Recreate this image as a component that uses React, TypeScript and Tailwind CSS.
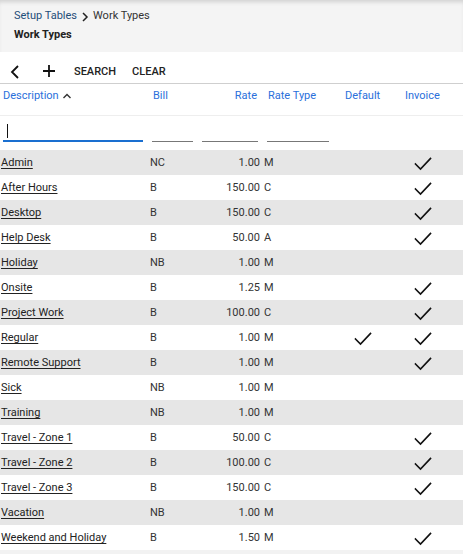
import React from "react";

type Row = { d: string; b: string; r: string; t: string; def?: boolean; inv?: boolean };

const rows: Row[] = [
  { d: "Admin", b: "NC", r: "1.00", t: "M", inv: true },
  { d: "After Hours", b: "B", r: "150.00", t: "C", inv: true },
  { d: "Desktop", b: "B", r: "150.00", t: "C", inv: true },
  { d: "Help Desk", b: "B", r: "50.00", t: "A", inv: true },
  { d: "Holiday", b: "NB", r: "1.00", t: "M" },
  { d: "Onsite", b: "B", r: "1.25", t: "M", inv: true },
  { d: "Project Work", b: "B", r: "100.00", t: "C", inv: true },
  { d: "Regular", b: "B", r: "1.00", t: "M", def: true, inv: true },
  { d: "Remote Support", b: "B", r: "1.00", t: "M", inv: true },
  { d: "Sick", b: "NB", r: "1.00", t: "M" },
  { d: "Training", b: "NB", r: "1.00", t: "M" },
  { d: "Travel - Zone 1", b: "B", r: "50.00", t: "C", inv: true },
  { d: "Travel - Zone 2", b: "B", r: "100.00", t: "C", inv: true },
  { d: "Travel - Zone 3", b: "B", r: "150.00", t: "C", inv: true },
  { d: "Vacation", b: "NB", r: "1.00", t: "M" },
  { d: "Weekend and Holiday", b: "B", r: "1.50", t: "M", inv: true },
];

function Check() {
  return (
    <svg width="18" height="14" viewBox="0 0 18 14" fill="none">
      <polyline points="1.5,7 6.5,12 16.5,1.5" stroke="#111" strokeWidth="1.6" strokeLinecap="square" />
    </svg>
  );
}

export default function App() {
  return (
    <div className="w-[463px] h-[554px] overflow-hidden bg-white text-[11px] text-[#333]" style={{ fontFamily: "Roboto, 'Liberation Sans', sans-serif" }}>
      <div className="h-[52px] bg-[#f4f4f4] pl-[14px] pt-[9px] shadow-[inset_0_4px_4px_-2px_rgba(0,0,0,0.15)]">
        <div className="flex items-center h-[15px] text-[#333]">
          <span className="text-[#1f4e79]">Setup Tables</span>
          <svg width="12" height="12" viewBox="0 0 12 12" className="mx-[2px]">
            <polyline points="4,2 8,6 4,10" fill="none" stroke="#222" strokeWidth="1.5" />
          </svg>
          <span>Work Types</span>
        </div>
        <div className="mt-[3px] font-bold text-[#222]">Work Types</div>
      </div>
      <div className="h-[32px] flex items-center pt-[6px] pl-[9px] border-b border-[#cfcfcf] text-[#222] font-medium">
        <svg width="14" height="16" viewBox="0 0 14 16" className="mt-[3px]">
          <polyline points="9,2 3,8 9,14" fill="none" stroke="#111" strokeWidth="1.8" />
        </svg>
        <svg width="16" height="16" viewBox="0 0 16 16" className="ml-[18px]">
          <path d="M8 2v12M2 8h12" stroke="#111" strokeWidth="1.8" />
        </svg>
        <span className="ml-[17px] mt-[4px]">SEARCH</span>
        <span className="ml-[16px] mt-[4px]">CLEAR</span>
      </div>
      <div className="h-[32px] flex items-start pt-[4px] text-[#2a6fdb] border-b border-[#eeeeee]">
        <div className="w-[150px] pl-[3px] flex items-center">
          Description
          <svg width="10" height="8" viewBox="0 0 10 8" className="ml-[3px]">
            <polyline points="1.5,6 5,2.5 8.5,6" fill="none" stroke="#333" strokeWidth="1.4" />
          </svg>
        </div>
        <div className="w-[50px] pl-[3px]">Bill</div>
        <div className="w-[57px] text-right">Rate</div>
        <div className="w-[84px] pl-[11px]">Rate Type</div>
        <div className="w-[60px] pl-[4px]">Default</div>
        <div className="pl-[4px]">Invoice</div>
      </div>
      <div className="h-[34px] flex items-end pb-[8px]">
        <div className="ml-[3px] w-[140px] h-[20px] border-b-2 border-[#1a6fd0] flex items-center pl-[4px]">
          <div className="w-px h-[14px] bg-[#111]" />
        </div>
        <div className="ml-[9px] w-[41px] border-b border-[#777]" />
        <div className="ml-[9px] w-[56px] border-b border-[#777]" />
        <div className="ml-[9px] w-[62px] border-b border-[#777]" />
      </div>
      {rows.map((r, i) => (
        <div key={r.d} className={`h-[25px] flex items-center pt-[2px] ${i % 2 === 0 ? "bg-[#e6e6e6]" : "bg-white"}`}>
          <div className="w-[150px] pl-[1px]"><span className="underline underline-offset-2 text-[#222]">{r.d}</span></div>
          <div className="w-[50px]">{r.b}</div>
          <div className="w-[60px] text-right">{r.r}</div>
          <div className="w-[40px] pl-[4px]">{r.t}</div>
          <div className="w-[100px] flex pl-[54px]">{r.def ? <Check /> : null}</div>
          <div className="w-[46px] flex justify-center">{r.inv ? <Check /> : null}</div>
        </div>
      ))}
      <div className="h-[25px] bg-[#f2f2f2]" />
    </div>
  );
}
